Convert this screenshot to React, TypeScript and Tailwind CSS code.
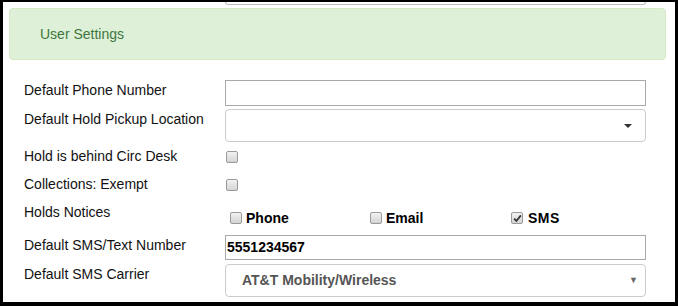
import React from 'react'

const FONT = { fontFamily: '"Liberation Sans", Arial, sans-serif' }

function Box({ checked = false }: { checked?: boolean }) {
  return (
    <span className="w-[12px] h-[12px] rounded-[2px] border border-[#9a9a9a] bg-gradient-to-b from-[#f2f2f2] to-[#d4d4d4] flex items-center justify-center shrink-0">
      {checked && (
        <svg width="9" height="9" viewBox="0 0 8 8">
          <path d="M1 4.2 L3 6.2 L7 1.2" stroke="#333" strokeWidth="1.6" fill="none" />
        </svg>
      )}
    </span>
  )
}

function Label({ children }: { children: React.ReactNode }) {
  return <div className="w-[201px] shrink-0 text-[14px] leading-[20px] text-[#111]">{children}</div>
}

export default function App() {
  return (
    <div
      className="w-[678px] h-[306px] bg-white border-black border-t-[2px] border-l-[3px] border-r-[3px] border-b-[4px] overflow-hidden"
      style={FONT}
    >
      {/* bottom of previous input */}
      <div className="ml-[222px] w-[421px] h-[3px] border-b border-x border-[#bdbdbd] rounded-b-[4px]" />

      {/* heading panel */}
      <div className="ml-[6px] mr-[9px] mt-[3px] h-[52px] bg-[#dff0d8] border border-[#d6e9c6] rounded-[4px] flex items-center pl-[30px]">
        <span className="text-[14px] text-[#3c763d]">User Settings</span>
      </div>

      <div className="pl-[21px] flex flex-col">
        {/* phone */}
        <div className="flex mt-[20px] h-[26px]">
          <Label>Default Phone Number</Label>
          <div className="w-[421px] h-[26px] border border-[#a9a9a9]" />
        </div>

        {/* pickup location */}
        <div className="flex mt-[3px] h-[33px]">
          <Label>Default Hold Pickup Location</Label>
          <div className="w-[421px] h-[33px] border border-[#ccc] rounded-[4px] flex items-center justify-end pr-[13px]">
            <span className="w-0 h-0 border-l-[4px] border-r-[4px] border-t-[4px] border-l-transparent border-r-transparent border-t-[#333]" />
          </div>
        </div>

        {/* behind circ desk */}
        <div className="flex mt-[4px] h-[20px] items-center">
          <Label>Hold is behind Circ Desk</Label>
          <div className="pl-[1px] pt-[1px]">
            <Box />
          </div>
        </div>

        {/* exempt */}
        <div className="flex mt-[8px] h-[20px] items-center">
          <Label>Collections: Exempt</Label>
          <div className="pl-[1px] pt-[1px]">
            <Box />
          </div>
        </div>

        {/* holds notices */}
        <div className="flex mt-[8px] h-[29px]">
          <Label>Holds Notices</Label>
          <div className="flex items-center h-[20px] mt-[6px] pl-[5px] text-[14px] font-bold text-black">
            <div className="flex items-center gap-[4px] w-[140px]">
              <Box />
              <span>Phone</span>
            </div>
            <div className="flex items-center gap-[4px] w-[141px]">
              <Box />
              <span>Email</span>
            </div>
            <div className="flex items-center gap-[5px]">
              <Box checked />
              <span className="tracking-[0.5px]">SMS</span>
            </div>
          </div>
        </div>

        {/* sms number */}
        <div className="flex mt-[4px] h-[25px]">
          <Label>Default SMS/Text Number</Label>
          <div className="w-[421px] h-[25px] border border-[#a9a9a9] flex items-center pl-[1px] text-[14px] font-bold text-black">
            5551234567
          </div>
        </div>

        {/* carrier */}
        <div className="flex mt-[4px] h-[33px]">
          <Label>Default SMS Carrier</Label>
          <div className="w-[421px] h-[33px] border border-[#ccc] rounded-[4px] flex items-center justify-between pl-[16px] pr-[7px]">
            <span className="text-[14px] font-bold text-[#555]">AT&amp;T Mobility/Wireless</span>
            <span className="text-[9px] text-[#666]">▼</span>
          </div>
        </div>
      </div>
    </div>
  )
}
